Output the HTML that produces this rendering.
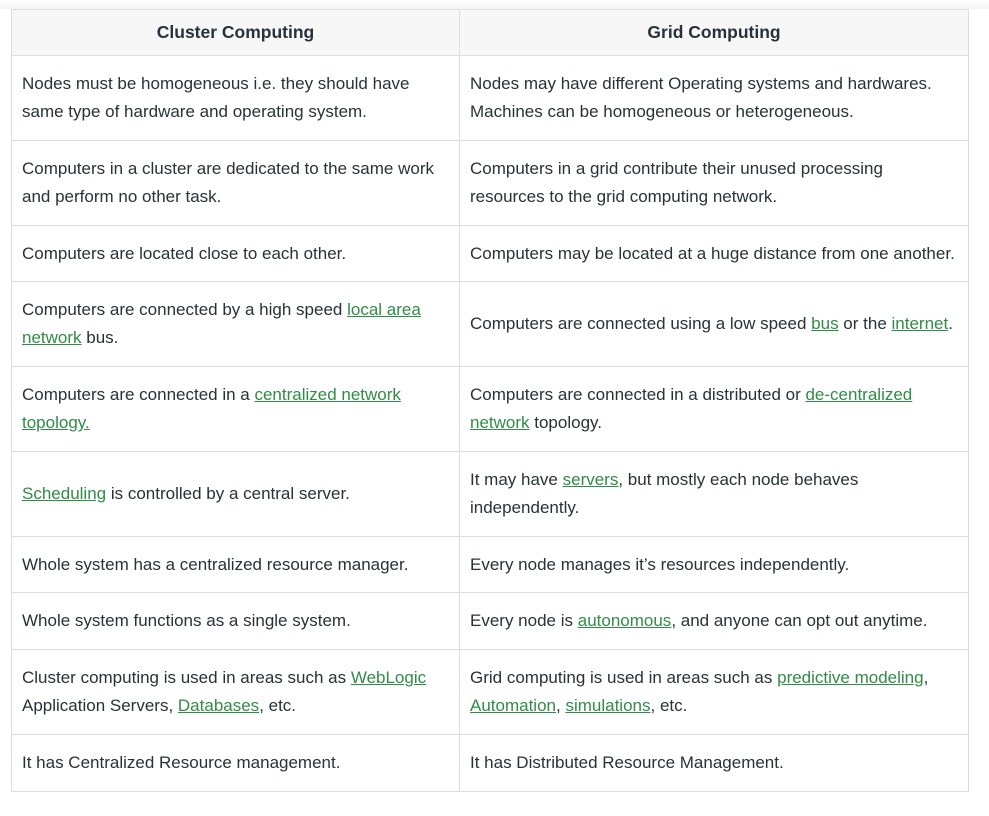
<!DOCTYPE html>
<html><head><meta charset="utf-8"><style>
html,body{margin:0;padding:0;background:#fff;width:989px;height:816px;overflow:hidden}
body{font-family:"Liberation Sans",sans-serif;color:#273239}
.top{position:absolute;left:0;top:0;width:989px;height:9px;background:linear-gradient(#fff,#f3f3f3)}
table{position:absolute;left:11px;top:9px;border-collapse:collapse;width:958px}
td,th{border:1px solid #dedede;padding:0 0 0 10px;font-size:17px;line-height:28px;white-space:nowrap;vertical-align:middle;text-align:left}
th{background:#f7f7f7;font-weight:bold;text-align:center;font-size:17.5px;padding:0 0 2px 0;color:#273239}
td:first-child,th:first-child{width:437px}
a{color:#2f8d46;text-decoration:underline}
</style></head><body>
<div class="top"></div>
<table>
<tr style="height:46px"><th>Cluster Computing</th><th>Grid Computing</th></tr>
<tr style="height:85px"><td>Nodes must be homogeneous i.e. they should have<br>same type of hardware and operating system.</td><td>Nodes may have different Operating systems and hardwares.<br>Machines can be homogeneous or heterogeneous.</td></tr>
<tr style="height:85px"><td>Computers in a cluster are dedicated to the same work<br>and perform no other task.</td><td>Computers in a grid contribute their unused processing<br>resources to the grid computing network.</td></tr>
<tr style="height:56px"><td>Computers are located close to each other.</td><td>Computers may be located at a huge distance from one another.</td></tr>
<tr style="height:85px"><td>Computers are connected by a high speed <a>local area</a><br><a>network</a> bus.</td><td>Computers are connected using a low speed <a>bus</a> or the <a>internet</a>.</td></tr>
<tr style="height:85px"><td>Computers are connected in a <a>centralized network</a><br><a>topology.</a></td><td>Computers are connected in a distributed or <a>de-centralized</a><br><a>network</a> topology.</td></tr>
<tr style="height:85px"><td><a>Scheduling</a> is controlled by a central server.</td><td>It may have <a>servers</a>, but mostly each node behaves<br>independently.</td></tr>
<tr style="height:56px"><td>Whole system has a centralized resource manager.</td><td>Every node manages it’s resources independently.</td></tr>
<tr style="height:57px"><td>Whole system functions as a single system.</td><td>Every node is <a>autonomous</a>, and anyone can opt out anytime.</td></tr>
<tr style="height:85px"><td>Cluster computing is used in areas such as <a>WebLogic</a><br>Application Servers, <a>Databases</a>, etc.</td><td>Grid computing is used in areas such as <a>predictive modeling</a>,<br><a>Automation</a>, <a>simulations</a>, etc.</td></tr>
<tr style="height:57px"><td>It has Centralized Resource management.</td><td>It has Distributed Resource Management.</td></tr>
</table>
</body></html>
